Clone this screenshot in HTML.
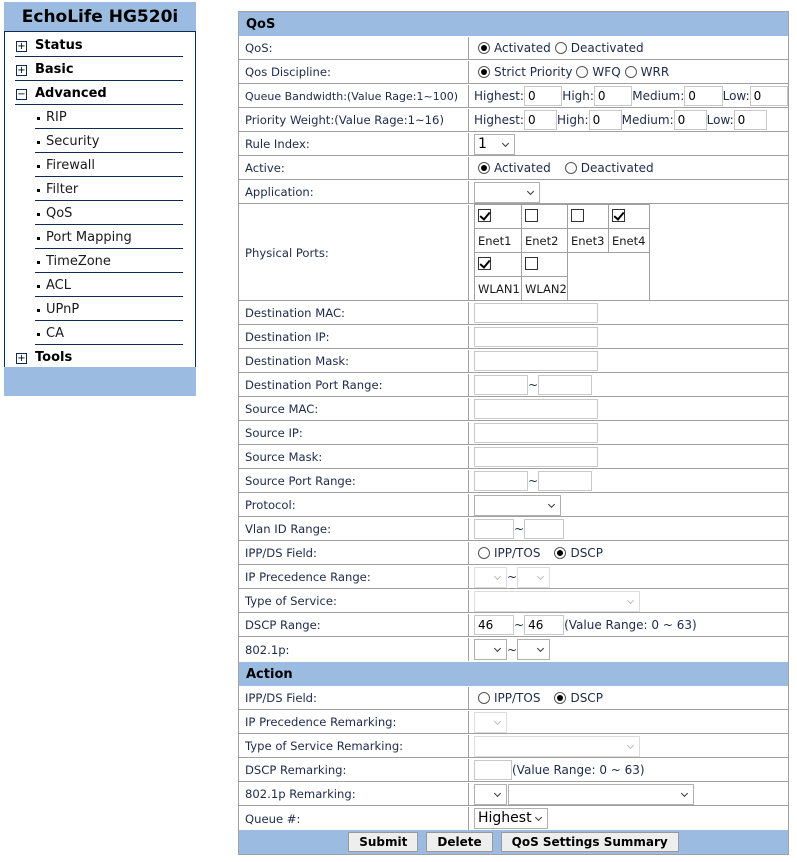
<!DOCTYPE html>
<html><head><meta charset="utf-8"><style>
*{box-sizing:border-box}
body{margin:0;width:797px;height:862px;background:#fff;font-family:"DejaVu Sans",Verdana,sans-serif;font-size:12px;color:#1e2a4a;position:relative;overflow:hidden}
.a{position:absolute}
#side{left:4px;top:2px;width:192px;height:394px;border-left:1px solid #0f2a55;border-right:1px solid #0f2a55}
#side .hd{left:-1px;top:0;width:192px;height:30px;background:#9bbce0;color:#000;font-weight:bold;font-size:17px;text-align:center;line-height:31px;border-bottom:1px solid #0f2a55}
#side .ft{left:-1px;top:365px;width:192px;height:29px;background:#9bbce0}
.mi{height:24px;border-bottom:1.5px solid #0f2a55;color:#000;line-height:26px;font-size:13px}
.top{left:10px;width:168px;font-weight:bold;padding-left:20px}
.top .bx{position:absolute;left:1px;top:8px;width:11px;height:11px;border:1px solid #0f2a55;font-size:10px;line-height:9px;text-align:center;font-weight:normal}
.sub{left:30px;width:148px;padding-left:11px;color:#1a1a1a}
.sub:before{content:"";position:absolute;left:2px;top:12px;width:3px;height:3px;background:#000}
#main{left:238px;top:11px;width:551px;height:844px;border:1px solid #a0a0a0}
.hr{left:0;width:549px;height:24px;background:#9bbce0;font-weight:bold;color:#000;font-size:13px;line-height:26px;padding-left:7px}
.row{left:0;width:549px;border-bottom:1px solid #a0a0a0}
.row .l{position:absolute;left:0;top:1px;bottom:0;width:230px;border-right:1px solid #a0a0a0;padding-left:6px;display:flex;align-items:center;white-space:nowrap;font-size:11.6px}
.row .v{position:absolute;left:231px;top:1px;bottom:0;right:0;display:flex;align-items:center;padding-left:4px;white-space:nowrap}
.in{display:inline-block;height:20px;border:1px solid #c8c8c8;background:#fff;font-size:12px;line-height:18px;padding-left:3px;color:#000}
.sel{display:inline-block;height:21px;border:1px solid #b0b0b0;background:#fff;position:relative;color:#000;font-size:14px;line-height:19px;padding-left:3px}
.sel:after{content:"";position:absolute;right:6px;top:6px;width:4px;height:4px;border-right:1.5px solid #333;border-bottom:1.5px solid #333;transform:rotate(45deg)}
.sel.d{border-color:#ddd}.sel.d:after{border-color:#bbb}
.r{display:inline-block;width:12px;height:12px;border:1px solid #555;border-radius:50%;position:relative;margin:0 4px 0 4px;vertical-align:-2px}
.r.on:after{content:"";position:absolute;left:2px;top:2px;width:6px;height:6px;border-radius:50%;background:#000}
.cb{display:inline-block;width:13px;height:13px;border:1px solid #333;position:relative}
.cb.on:after{content:"";position:absolute;left:3px;top:0;width:4px;height:8px;border-right:2px solid #000;border-bottom:2px solid #000;transform:rotate(40deg)}
.pt{border-collapse:collapse;position:absolute;left:4px;top:-1px}
.pt td{border:1px solid #a0a0a0;height:24px;padding:0 0 0 3px;font-size:11.5px;color:#1a1a1a}
.btn{display:inline-block;height:20px;border:1px solid #999;background:#eee;font-weight:bold;color:#000;font-size:12px;line-height:19px;padding:0 10px;margin:0 4px}
</style></head><body>
<div id="side" class="a">
<div class="hd a">EchoLife HG520i</div>
<div class="a mi top" style="top:31px"><span class="bx">+</span>Status</div>
<div class="a mi top" style="top:55px"><span class="bx">+</span>Basic</div>
<div class="a mi top" style="top:79px"><span class="bx">−</span>Advanced</div>
<div class="a mi sub" style="top:103px">RIP</div>
<div class="a mi sub" style="top:127px">Security</div>
<div class="a mi sub" style="top:151px">Firewall</div>
<div class="a mi sub" style="top:175px">Filter</div>
<div class="a mi sub" style="top:199px">QoS</div>
<div class="a mi sub" style="top:223px">Port Mapping</div>
<div class="a mi sub" style="top:247px">TimeZone</div>
<div class="a mi sub" style="top:271px">ACL</div>
<div class="a mi sub" style="top:295px">UPnP</div>
<div class="a mi sub" style="top:319px">CA</div>
<div class="a mi top" style="top:343px;border:none"><span class="bx">+</span>Tools</div>
<div class="ft a"></div>
</div>

<div id="main" class="a">
<div class="a hr" style="top:0">QoS</div>
<div class="a row" style="top:24px;height:24px"><div class="l">QoS:</div><div class="v"><span class="r on"></span>Activated <span class="r"></span>Deactivated</div></div>
<div class="a row" style="top:48px;height:24px"><div class="l">Qos Discipline:</div><div class="v"><span class="r on"></span>Strict Priority <span class="r"></span>WFQ <span class="r"></span>WRR</div></div>
<div class="a row" style="top:72px;height:24px"><div class="l" style="font-size:11px">Queue Bandwidth:(Value Rage:1~100)</div><div class="v">Highest:<span class="in" style="width:40px">0</span>High:<span class="in" style="width:40px">0</span>Medium:<span class="in" style="width:40px">0</span>Low:<span class="in" style="width:40px">0</span></div></div>
<div class="a row" style="top:96px;height:24px"><div class="l">Priority Weight:(Value Rage:1~16)</div><div class="v">Highest:<span class="in" style="width:33px">0</span>High:<span class="in" style="width:33px">0</span>Medium:<span class="in" style="width:33px">0</span>Low:<span class="in" style="width:33px">0</span></div></div>
<div class="a row" style="top:120px;height:24px"><div class="l">Rule Index:</div><div class="v"><span class="sel" style="width:41px">1</span></div></div>
<div class="a row" style="top:144px;height:24px"><div class="l">Active:</div><div class="v"><span class="r on"></span>Activated <span class="r" style="margin-left:14px"></span>Deactivated</div></div>
<div class="a row" style="top:168px;height:24px"><div class="l">Application:</div><div class="v"><span class="sel" style="width:66px"></span></div></div>
<div class="a row" style="top:192px;height:97px"><div class="l">Physical Ports:</div><div class="v" style="padding:0">
<table class="pt"><tr><td style="width:47px"><span class="cb on"></span></td><td style="width:46px"><span class="cb"></span></td><td style="width:41px"><span class="cb"></span></td><td style="width:41px"><span class="cb on"></span></td></tr>
<tr><td>Enet1</td><td>Enet2</td><td>Enet3</td><td>Enet4</td></tr>
<tr><td><span class="cb on"></span></td><td><span class="cb"></span></td><td colspan="2" rowspan="2" style="border-right:1px solid #a0a0a0"></td></tr>
<tr><td>WLAN1</td><td>WLAN2</td></tr></table></div></div>
<div class="a row" style="top:289px;height:24px"><div class="l">Destination MAC:</div><div class="v"><span class="in" style="width:124px"></span></div></div>
<div class="a row" style="top:313px;height:24px"><div class="l">Destination IP:</div><div class="v"><span class="in" style="width:124px"></span></div></div>
<div class="a row" style="top:337px;height:24px"><div class="l">Destination Mask:</div><div class="v"><span class="in" style="width:124px"></span></div></div>
<div class="a row" style="top:361px;height:24px"><div class="l">Destination Port Range:</div><div class="v"><span class="in" style="width:54px"></span>~<span class="in" style="width:54px"></span></div></div>
<div class="a row" style="top:385px;height:24px"><div class="l">Source MAC:</div><div class="v"><span class="in" style="width:124px"></span></div></div>
<div class="a row" style="top:409px;height:24px"><div class="l">Source IP:</div><div class="v"><span class="in" style="width:124px"></span></div></div>
<div class="a row" style="top:433px;height:24px"><div class="l">Source Mask:</div><div class="v"><span class="in" style="width:124px"></span></div></div>
<div class="a row" style="top:457px;height:24px"><div class="l">Source Port Range:</div><div class="v"><span class="in" style="width:54px"></span>~<span class="in" style="width:54px"></span></div></div>
<div class="a row" style="top:481px;height:24px"><div class="l">Protocol:</div><div class="v"><span class="sel" style="width:87px"></span></div></div>
<div class="a row" style="top:505px;height:24px"><div class="l">Vlan ID Range:</div><div class="v"><span class="in" style="width:40px"></span>~<span class="in" style="width:40px"></span></div></div>
<div class="a row" style="top:529px;height:24px"><div class="l">IPP/DS Field:</div><div class="v"><span class="r"></span>IPP/TOS <span class="r on" style="margin-left:14px"></span>DSCP</div></div>
<div class="a row" style="top:553px;height:24px"><div class="l">IP Precedence Range:</div><div class="v"><span class="sel d" style="width:33px"></span>~<span class="sel d" style="width:33px"></span></div></div>
<div class="a row" style="top:577px;height:24px"><div class="l">Type of Service:</div><div class="v"><span class="sel d" style="width:166px"></span></div></div>
<div class="a row" style="top:601px;height:24px"><div class="l">DSCP Range:</div><div class="v"><span class="in" style="width:40px">46</span>~<span class="in" style="width:40px">46</span>(Value Range: 0 ~ 63)</div></div>
<div class="a row" style="top:625px;height:24px;border-bottom:none"><div class="l">802.1p:</div><div class="v"><span class="sel" style="width:33px"></span>~<span class="sel" style="width:33px"></span></div></div>
<div class="a hr" style="top:650px">Action</div>
<div class="a row" style="top:674px;height:24px"><div class="l">IPP/DS Field:</div><div class="v"><span class="r"></span>IPP/TOS <span class="r on" style="margin-left:14px"></span>DSCP</div></div>
<div class="a row" style="top:698px;height:24px"><div class="l">IP Precedence Remarking:</div><div class="v"><span class="sel d" style="width:33px"></span></div></div>
<div class="a row" style="top:722px;height:24px"><div class="l">Type of Service Remarking:</div><div class="v"><span class="sel d" style="width:166px"></span></div></div>
<div class="a row" style="top:746px;height:24px"><div class="l">DSCP Remarking:</div><div class="v"><span class="in" style="width:38px"></span>(Value Range: 0 ~ 63)</div></div>
<div class="a row" style="top:770px;height:24px"><div class="l">802.1p Remarking:</div><div class="v"><span class="sel" style="width:33px"></span><span class="sel" style="width:186px;margin-left:1px"></span></div></div>
<div class="a row" style="top:794px;height:24px;border-bottom:none"><div class="l">Queue #:</div><div class="v"><span class="sel" style="width:74px">Highest</span></div></div>
<div class="a" style="left:0;top:818px;width:549px;height:24px;background:#9bbce0;text-align:center;padding-top:2px"><span class="btn">Submit</span><span class="btn">Delete</span><span class="btn">QoS Settings Summary</span></div>
</div>
</body></html>
